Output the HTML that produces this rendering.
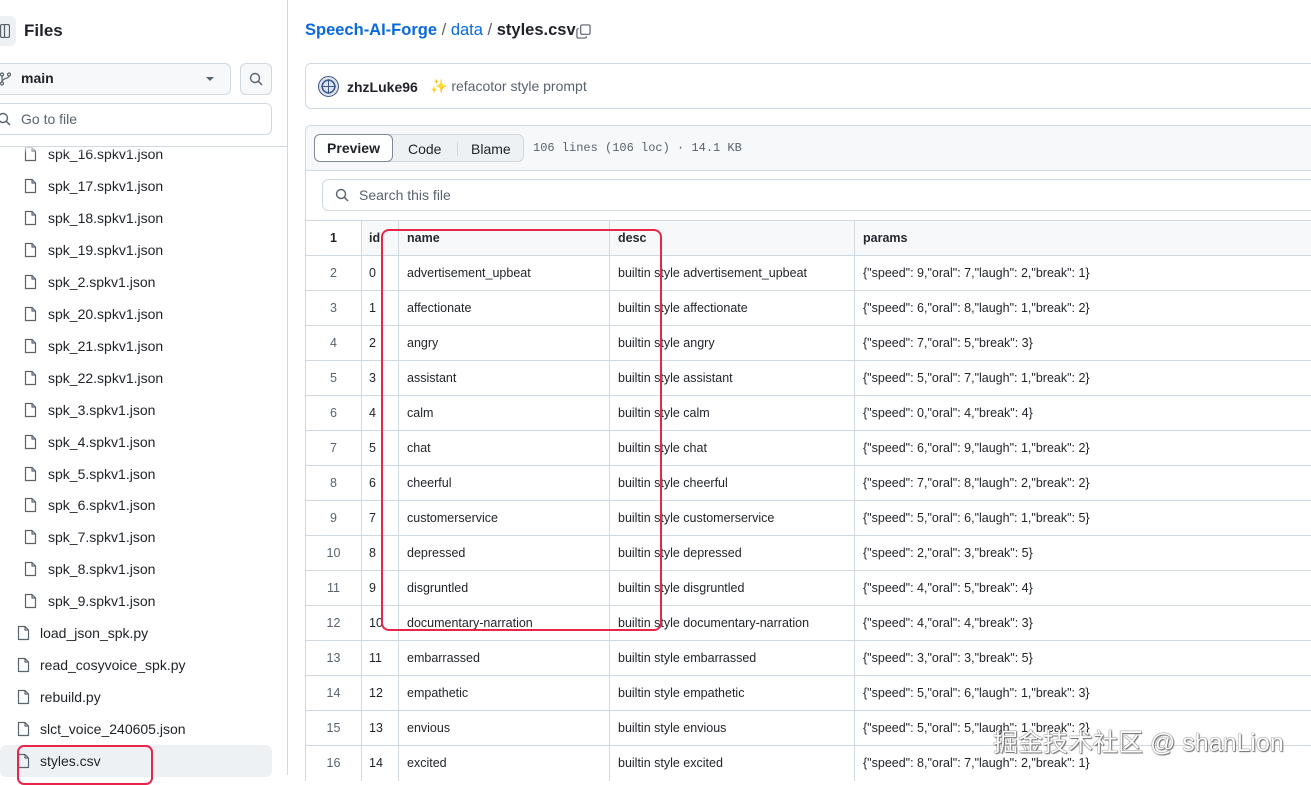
<!DOCTYPE html>
<html><head><meta charset="utf-8">
<style>
*{box-sizing:border-box;margin:0;padding:0}
body{width:1311px;height:775px;overflow:hidden;background:#fff;font-family:"Liberation Sans",Arial,sans-serif;color:#1f2328;position:relative}
.abs{position:absolute}
.side{position:absolute;left:0;top:0;width:288px;height:775px;border-right:1px solid #d1d9e0}
.fi{position:absolute;font-size:14px;color:#1f2328;height:32px;line-height:32px;white-space:nowrap}
.fi svg{position:absolute;top:8px}
.tbl{position:absolute;left:305px;top:220px;width:1020px}
.row{position:absolute;left:0;width:1020px;height:35px;border-top:1px solid #d1d9e0;font-size:12.5px;line-height:34px}
.row div{position:absolute;top:0;height:35px;border-left:1px solid #d1d9e0;padding-left:8px;white-space:nowrap}
.row .ln{left:0;width:56px;text-align:center;padding:0;color:#59636e}
.row .c1{left:56px;padding-left:7px}
.row .c2{left:93px}
.row .c3{left:304px}
.row .c4{left:549px}
.hdr{background:#f6f8fa;font-weight:bold}
.hdr div{color:#25292e}
</style></head><body>
<div class="side">
  <div class="abs" style="left:-10px;top:16px;width:26px;height:30px;background:#eef1f4;border-radius:6px"></div>
  <svg class="abs" style="left:0;top:24px" width="10" height="14" viewBox="0 0 10 14"><rect x="0.5" y="0.5" width="9" height="13" rx="1.5" fill="none" stroke="#59636e" stroke-width="1.3"/><line x1="4.5" y1="1" x2="4.5" y2="13" stroke="#59636e" stroke-width="1.3"/></svg>
  <div class="abs" style="left:24px;top:21px;font-size:17px;font-weight:bold">Files</div>
  <div class="abs" style="left:-10px;top:63px;width:241px;height:32px;background:#f6f8fa;border:1px solid #d1d9e0;border-radius:6px"></div>
  <svg class="abs" style="left:0;top:72px" width="12" height="14" viewBox="0 0 12 14"><circle cx="2" cy="2.5" r="1.5" fill="none" stroke="#59636e" stroke-width="1.2"/><circle cx="9" cy="2.5" r="1.5" fill="none" stroke="#59636e" stroke-width="1.2"/><circle cx="2" cy="11.5" r="1.5" fill="none" stroke="#59636e" stroke-width="1.2"/><path d="M2 4v6M9 4c0 3-7 2-7 6" fill="none" stroke="#59636e" stroke-width="1.2"/></svg>
  <div class="abs" style="left:21px;top:70px;font-size:14px;font-weight:bold">main</div>
  <div class="abs" style="left:206px;top:77px;width:0;height:0;border-left:4px solid transparent;border-right:4px solid transparent;border-top:4px solid #59636e"></div>
  <div class="abs" style="left:240px;top:63px;width:32px;height:32px;background:#f6f8fa;border:1px solid #d1d9e0;border-radius:6px"></div>
  <svg class="abs" style="left:249px;top:72px" width="14" height="14" viewBox="0 0 14 14"><circle cx="6" cy="6" r="4.5" fill="none" stroke="#59636e" stroke-width="1.4"/><line x1="9.3" y1="9.3" x2="13" y2="13" stroke="#59636e" stroke-width="1.5"/></svg>
  <div class="abs" style="left:-10px;top:103px;width:282px;height:32px;border:1px solid #d1d9e0;border-radius:6px"></div>
  <svg class="abs" style="left:-3px;top:112px" width="14" height="14" viewBox="0 0 14 14"><circle cx="6" cy="6" r="4.5" fill="none" stroke="#59636e" stroke-width="1.4"/><line x1="9.3" y1="9.3" x2="13" y2="13" stroke="#59636e" stroke-width="1.5"/></svg>
  <div class="abs" style="left:21px;top:111px;font-size:14px;color:#59636e">Go to file</div>
  <div class="abs" style="left:0;top:745px;width:272px;height:32px;background:#eef1f4;border-radius:6px"></div>
  <div id="files"></div>
  <div class="abs" style="left:0;top:146px;width:288px;height:1px;background:#d1d9e0"></div>
</div>
<div class="abs" style="left:305px;top:21px;font-size:16.5px;white-space:nowrap"><span style="color:#0969da;font-weight:bold">Speech-AI-Forge</span> <span style="color:#59636e">/</span> <span style="color:#0969da">data</span> <span style="color:#59636e">/</span> <b>styles.csv</b></div>
<svg class="abs" style="left:576px;top:24px" width="15" height="15" viewBox="0 0 16 16"><rect x="5" y="1" width="10" height="10" rx="1.5" fill="none" stroke="#59636e" stroke-width="1.3"/><path d="M3 5H2.5A1.5 1.5 0 0 0 1 6.5v7A1.5 1.5 0 0 0 2.5 15h7a1.5 1.5 0 0 0 1.5-1.5V13" fill="none" stroke="#59636e" stroke-width="1.3"/></svg>
<div class="abs" style="left:305px;top:63px;width:1020px;height:46px;border:1px solid #d1d9e0;border-radius:6px"></div>
<svg class="abs" style="left:318px;top:76px" width="21" height="21" viewBox="0 0 20 20"><circle cx="10" cy="10" r="9.5" fill="#dfe6f2" stroke="#3e5a8f" stroke-width="1"/><circle cx="10" cy="10" r="6" fill="none" stroke="#3e5a8f" stroke-width="1.6"/><path d="M3 10h14M10 3v14" stroke="#3e5a8f" stroke-width="1"/></svg>
<div class="abs" style="left:347px;top:79px;font-size:14px;font-weight:bold">zhzLuke96</div>
<div class="abs" style="left:430px;top:78px;font-size:14px;color:#59636e;white-space:nowrap"><span style="color:#f0c040">✨</span> refacotor style prompt</div>
<div class="abs" style="left:305px;top:125px;width:1020px;height:650px;border:1px solid #d1d9e0;border-bottom:none;border-radius:6px 6px 0 0"></div>
<div class="abs" style="left:306px;top:126px;width:1010px;height:45px;background:#f6f8fa;border-bottom:1px solid #d1d9e0;border-radius:6px 0 0 0"></div>
<div class="abs" style="left:314px;top:134px;width:210px;height:28px;background:#eef1f4;border:1px solid #d1d9e0;border-radius:6px"></div>
<div class="abs" style="left:314px;top:134px;width:79px;height:28px;background:#fff;border:1px solid #818b98;border-radius:6px;font-size:14px;font-weight:bold;text-align:center;line-height:26px">Preview</div>
<div class="abs" style="left:408px;top:141px;font-size:14px">Code</div>
<div class="abs" style="left:457px;top:142px;width:1px;height:14px;background:#d1d9e0"></div>
<div class="abs" style="left:471px;top:141px;font-size:14px">Blame</div>
<div class="abs" style="left:533px;top:141px;font-size:12px;font-family:'Liberation Mono',monospace;color:#59636e">106 lines (106 loc) · 14.1 KB</div>
<div class="abs" style="left:322px;top:179px;width:1000px;height:32px;border:1px solid #d1d9e0;border-radius:6px"></div>
<svg class="abs" style="left:335px;top:188px" width="14" height="14" viewBox="0 0 14 14"><circle cx="6" cy="6" r="4.5" fill="none" stroke="#59636e" stroke-width="1.4"/><line x1="9.3" y1="9.3" x2="13" y2="13" stroke="#59636e" stroke-width="1.5"/></svg>
<div class="abs" style="left:359px;top:187px;font-size:14px;color:#59636e">Search this file</div>
<div class="tbl" id="tbl"></div>
<div class="abs" style="left:381px;top:229px;width:281px;height:402px;border:2.5px solid #e8264a;border-radius:8px"></div>
<div class="abs" style="left:17px;top:745px;width:136px;height:40px;border:2.5px solid #e8264a;border-radius:7px"></div>
<div class="abs" style="left:993px;top:723px;font-size:25px;color:#fff;font-family:'Liberation Sans','Noto Sans CJK SC',sans-serif;text-shadow:0 0 1px #555,0 0 1px #555,1px 1px 1px #777;white-space:nowrap">掘金技术社区 @ shanLion</div>
<script>
var f=[["spk_16.spkv1.json",1],["spk_17.spkv1.json",1],["spk_18.spkv1.json",1],["spk_19.spkv1.json",1],["spk_2.spkv1.json",1],["spk_20.spkv1.json",1],["spk_21.spkv1.json",1],["spk_22.spkv1.json",1],["spk_3.spkv1.json",1],["spk_4.spkv1.json",1],["spk_5.spkv1.json",1],["spk_6.spkv1.json",1],["spk_7.spkv1.json",1],["spk_8.spkv1.json",1],["spk_9.spkv1.json",1],["load_json_spk.py",0],["read_cosyvoice_spk.py",0],["rebuild.py",0],["slct_voice_240605.json",0],["styles.csv",0]];
var h='';var ys=[138,170,202,234,266,298,330,362,394,426,458,489,521,553,585,617,649,681,713,745];
f.forEach(function(x,i){var ix=x[1]?24:17,tx=x[1]?48:40;
h+='<div class="fi" style="left:'+ix+'px;top:'+ys[i]+'px;width:260px"><svg style="left:0" width="13" height="16" viewBox="0 0 13 16"><path d="M1.5 1.5h6.5l3.5 3.5v9.5h-10z M8 1.5v3.5h3.5" fill="none" stroke="#59636e" stroke-width="1.2" stroke-linejoin="round"/></svg><span style="position:absolute;left:'+(tx-ix)+'px">'+x[0]+'</span></div>';});
h+='<div class="abs" style="left:0;top:140px;width:287px;height:7px;background:#fff"></div><div class="abs" style="left:0;top:147px;width:287px;height:6px;background:linear-gradient(rgba(255,255,255,.8),rgba(255,255,255,0))"></div>';
document.getElementById('files').innerHTML=h;
var d=[["advertisement_upbeat",'{"speed": 9,"oral": 7,"laugh": 2,"break": 1}'],["affectionate",'{"speed": 6,"oral": 8,"laugh": 1,"break": 2}'],["angry",'{"speed": 7,"oral": 5,"break": 3}'],["assistant",'{"speed": 5,"oral": 7,"laugh": 1,"break": 2}'],["calm",'{"speed": 0,"oral": 4,"break": 4}'],["chat",'{"speed": 6,"oral": 9,"laugh": 1,"break": 2}'],["cheerful",'{"speed": 7,"oral": 8,"laugh": 2,"break": 2}'],["customerservice",'{"speed": 5,"oral": 6,"laugh": 1,"break": 5}'],["depressed",'{"speed": 2,"oral": 3,"break": 5}'],["disgruntled",'{"speed": 4,"oral": 5,"break": 4}'],["documentary-narration",'{"speed": 4,"oral": 4,"break": 3}'],["embarrassed",'{"speed": 3,"oral": 3,"break": 5}'],["empathetic",'{"speed": 5,"oral": 6,"laugh": 1,"break": 3}'],["envious",'{"speed": 5,"oral": 5,"laugh": 1,"break": 2}'],["excited",'{"speed": 8,"oral": 7,"laugh": 2,"break": 1}']];
var t='<div class="row hdr" style="top:0"><div class="ln" style="background:#fff;font-weight:bold;color:#1f2328">1</div><div class="c1">id</div><div class="c2">name</div><div class="c3">desc</div><div class="c4">params</div></div>';
d.forEach(function(r,i){t+='<div class="row" style="top:'+(35*(i+1))+'px"><div class="ln">'+(i+2)+'</div><div class="c1">'+i+'</div><div class="c2">'+r[0]+'</div><div class="c3">builtin style '+r[0]+'</div><div class="c4">'+r[1]+'</div></div>';});
document.getElementById('tbl').innerHTML=t;
</script>
</body></html>
